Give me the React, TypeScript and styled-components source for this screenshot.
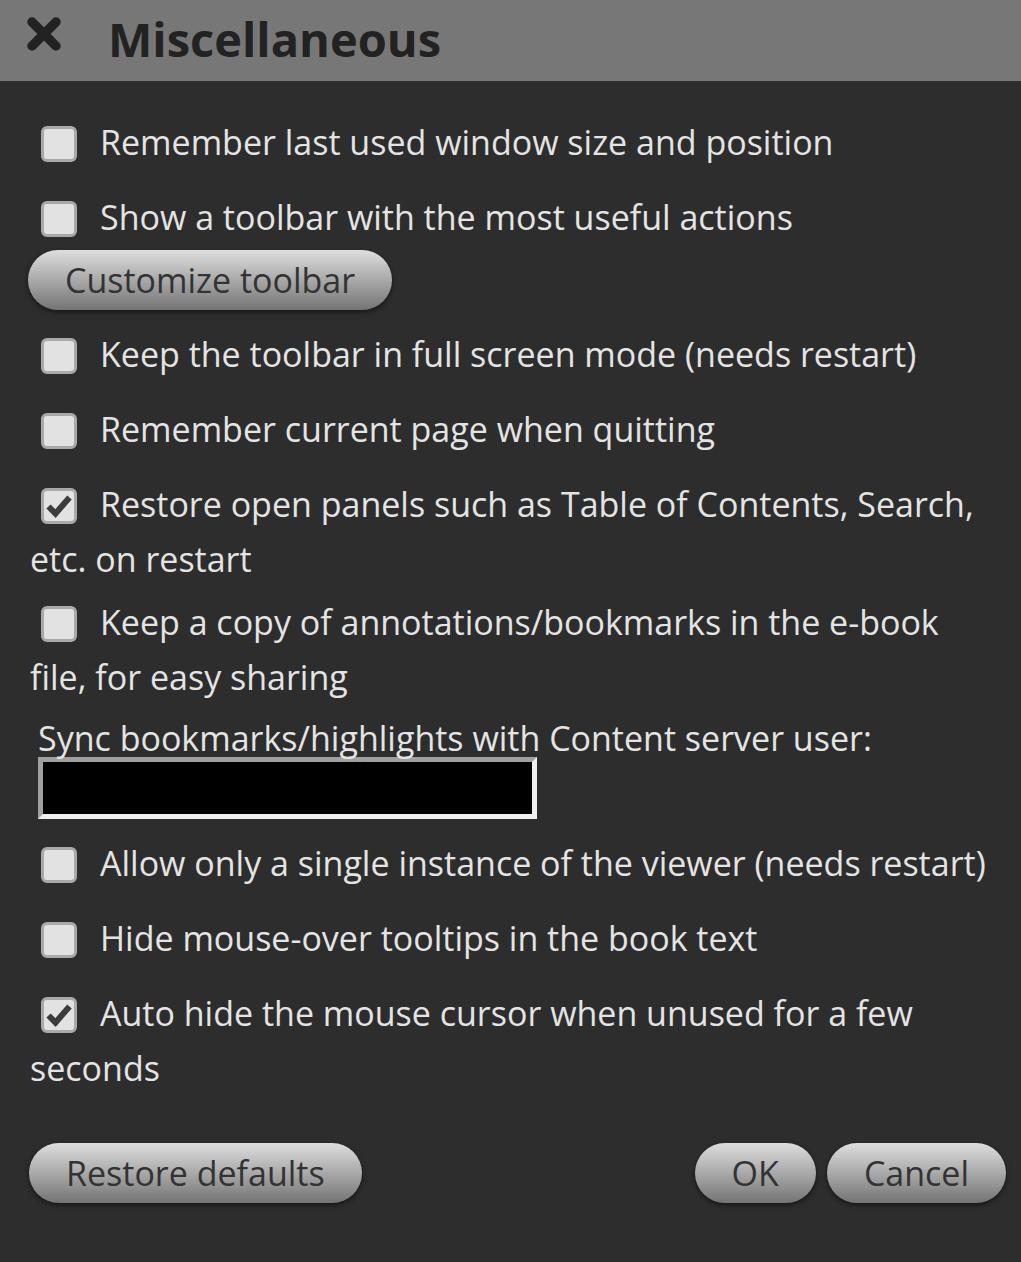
import React from 'react';
import styled, { createGlobalStyle } from 'styled-components';

const GlobalStyle = createGlobalStyle`
   html, body {
      margin: 0;
      padding: 0;
      background-color: #2d2d2d;
   }
   * {
      box-sizing: border-box;
   }
`;

type OptionType = {
   text: string;
   checked?: boolean;
};

const topOptions: OptionType[] = [
   { text: 'Remember last used window size and position' },
   { text: 'Show a toolbar with the most useful actions' },
];

const middleOptions: OptionType[] = [
   { text: 'Keep the toolbar in full screen mode (needs restart)' },
   { text: 'Remember current page when quitting' },
   { text: 'Restore open panels such as Table of Contents, Search, etc. on restart', checked: true },
   { text: 'Keep a copy of annotations/bookmarks in the e-book file, for easy sharing' },
];

const bottomOptions: OptionType[] = [
   { text: 'Allow only a single instance of the viewer (needs restart)' },
   { text: 'Hide mouse-over tooltips in the book text' },
   { text: 'Auto hide the mouse cursor when unused for a few seconds', checked: true },
];

const CloseIcon = () => (
   <svg width="38" height="36" viewBox="0 0 38 36">
      <path d="M7 6 L31 30 M31 6 L7 30" stroke="#222" strokeWidth="9.5" strokeLinecap="round" />
   </svg>
);

const CheckMark = () => (
   <svg width="30" height="30" viewBox="0 0 30 30">
      <path d="M4.5 15.5 L11.5 22.5 L25.5 6.5" stroke="#3c3c3c" strokeWidth="6" fill="none" />
   </svg>
);

const Option = (props: OptionType) => {
   return (
      <Row>
         <Checkbox>{props.checked && <CheckMark />}</Checkbox>
         {props.text}
      </Row>
   );
};

export default function App() {
   return (
      <Page>
         <GlobalStyle />
         <Header>
            <CloseButton>
               <CloseIcon />
            </CloseButton>
            <Title>Miscellaneous</Title>
         </Header>
         <Body>
            {topOptions.map((o) => (
               <Option key={o.text} {...o} />
            ))}
            <ToolbarButton>Customize toolbar</ToolbarButton>
            {middleOptions.map((o) => (
               <Option key={o.text} {...o} />
            ))}
            <SyncLabel>Sync bookmarks/highlights with Content server user:</SyncLabel>
            <SyncInput />
            {bottomOptions.map((o) => (
               <Option key={o.text} {...o} />
            ))}
            <Footer>
               <Button>Restore defaults</Button>
               <Spacer />
               <Button>OK</Button>
               <Button>Cancel</Button>
            </Footer>
         </Body>
      </Page>
   );
}

const Page = styled.div`
   width: 1021px;
   min-height: 1262px;
   background-color: #2d2d2d;
   font-family: 'Open Sans', 'Noto Sans', sans-serif;
   color: #e4e4e4;
`;

const Header = styled.div`
   height: 81px;
   background-color: #777777;
   display: flex;
   align-items: center;
   padding-left: 25px;
`;

const CloseButton = styled.span`
   display: flex;
   width: 38px;
   height: 36px;
   margin-top: -14px;
   margin-right: 45px;
`;

const Title = styled.h1`
   margin: 0;
   font-size: 47px;
   font-weight: 700;
   color: #222;
   line-height: 1;
   margin-top: -2px;
`;

const Body = styled.div`
   padding: 40px 25px 0 30px;
   font-size: 34px;
   line-height: 43px;
`;

const Row = styled.div`
   margin-bottom: 20px;

   &:nth-child(2) {
      margin-bottom: 0;
   }
`;

const Checkbox = styled.span`
   display: inline-flex;
   align-items: center;
   justify-content: center;
   vertical-align: top;
   width: 36px;
   height: 36px;
   margin: 5px 23px 14px 11px;
   border: 3px solid #a9a9a9;
   border-radius: 6px;
   background-color: #e2e2e2;
`;

const Button = styled.button`
   height: 60px;
   padding: 0 37px;
   border: none;
   border-radius: 30px;
   background: linear-gradient(to bottom, #dedede, #747474);
   box-shadow: 0 2px 5px rgba(0, 0, 0, 0.55);
   font-family: inherit;
   font-size: 34px;
   color: #333;
   cursor: pointer;
`;

const ToolbarButton = styled(Button)`
   display: block;
   margin: -1px 0 23px -2px;
`;

const SyncLabel = styled.div`
   padding-left: 8px;
   margin-top: -2px;
`;

const SyncInput = styled.div`
   width: 499px;
   height: 62px;
   margin: -3px 0 23px 8px;
   background-color: #000;
   border: 5px solid;
   border-color: #a0a0a0 #f0f0f0 #f0f0f0 #a0a0a0;
`;

const Footer = styled.div`
   display: flex;
   gap: 11px;
   margin-top: 53px;
   margin-right: -10px;
   margin-left: -1px;
`;

const Spacer = styled.div`
   flex: 1;
`;
